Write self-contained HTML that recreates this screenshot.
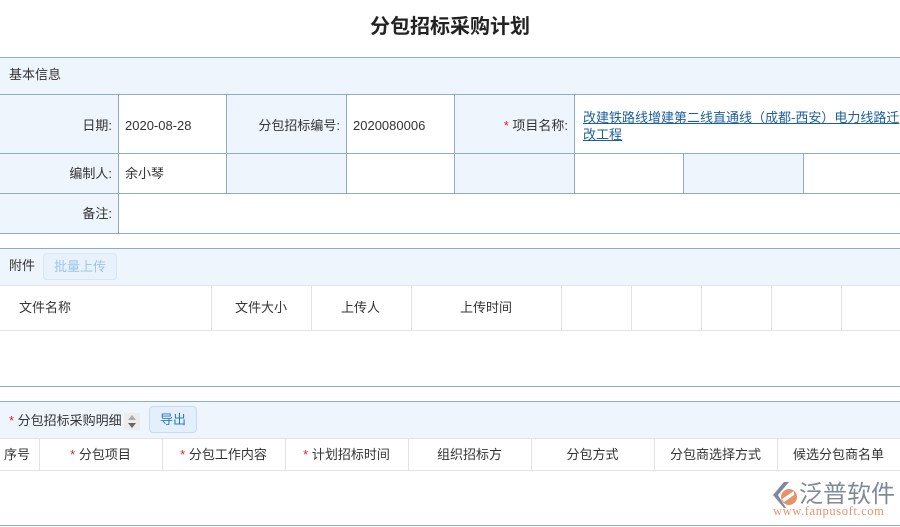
<!DOCTYPE html>
<html><head><meta charset="utf-8"><style>
*{margin:0;padding:0;box-sizing:border-box}
body{width:900px;height:527px;background:#fff;position:relative;overflow:hidden;font-family:"Liberation Sans","Noto Sans CJK SC",sans-serif;font-size:13px;line-height:15px;color:#333}
.a{position:absolute}
.bg{background:#eff5fd}
.hl{position:absolute;left:0;width:900px;height:1px;background:#8fadbf}
.vl{position:absolute;width:1px;background:#8fadbf}
.gl{position:absolute;width:1px;background:#e3e3e3}
.lab{position:absolute;text-align:right}
.r{color:#e02020}
</style></head><body>
<div class="a" style="left:0;top:15px;width:900px;text-align:center;font-size:20px;line-height:24px;font-weight:bold;color:#222">分包招标采购计划</div>

<div class="a bg" style="left:0;top:57px;width:900px;height:37px"></div>
<div class="hl" style="top:57px"></div>
<div class="a" style="left:9px;top:67px">基本信息</div>
<div class="hl" style="top:94px"></div>
<div class="a bg" style="left:0;top:95px;width:118px;height:138px"></div>
<div class="a bg" style="left:226px;top:95px;width:120px;height:98px"></div>
<div class="a bg" style="left:454px;top:95px;width:120px;height:98px"></div>
<div class="a bg" style="left:683px;top:154px;width:120px;height:39px"></div>
<div class="vl" style="left:118px;top:94px;height:139px"></div>
<div class="vl" style="left:226px;top:94px;height:99px"></div>
<div class="vl" style="left:346px;top:94px;height:99px"></div>
<div class="vl" style="left:454px;top:94px;height:99px"></div>
<div class="vl" style="left:574px;top:94px;height:99px"></div>
<div class="vl" style="left:683px;top:153px;height:40px"></div>
<div class="vl" style="left:803px;top:153px;height:40px"></div>
<div class="hl" style="top:153px"></div>
<div class="hl" style="top:193px"></div>
<div class="hl" style="top:233px"></div>
<div class="lab" style="left:0;width:112px;top:118px">日期:</div>
<div class="a" style="left:125px;top:118px">2020-08-28</div>
<div class="lab" style="left:226px;width:114px;top:118px">分包招标编号:</div>
<div class="a" style="left:353px;top:118px">2020080006</div>
<div class="lab" style="left:454px;width:114px;top:118px"><span class="r">*</span> 项目名称:</div>
<div class="a" style="left:583px;top:109px;width:330px;color:#1d5f9e;text-decoration:underline;line-height:17px">改建铁路线增建第二线直通线（成都-西安）电力线路迁<br>改工程</div>
<div class="lab" style="left:0;width:112px;top:166px">编制人:</div>
<div class="a" style="left:125px;top:166px">余小琴</div>
<div class="lab" style="left:0;width:112px;top:206px">备注:</div>

<div class="a bg" style="left:0;top:248px;width:900px;height:37px"></div>
<div class="hl" style="top:248px"></div>
<div class="a" style="left:9px;top:258px">附件</div>
<div class="a" style="left:43px;top:253px;width:74px;height:27px;border:1px solid #d6e6f3;border-radius:4px;background:#e8f2fc;color:#9fc5e6;text-align:center;line-height:25px">批量上传</div>
<div class="a" style="left:0;top:285px;width:900px;height:1px;background:#e3e3e3"></div>
<div class="a" style="left:0;top:330px;width:900px;height:1px;background:#e3e3e3"></div>
<div class="gl" style="left:211px;top:285px;height:45px"></div>
<div class="gl" style="left:311px;top:285px;height:45px"></div>
<div class="gl" style="left:411px;top:285px;height:45px"></div>
<div class="gl" style="left:561px;top:285px;height:45px"></div>
<div class="gl" style="left:631px;top:285px;height:45px"></div>
<div class="gl" style="left:701px;top:285px;height:45px"></div>
<div class="gl" style="left:771px;top:285px;height:45px"></div>
<div class="gl" style="left:841px;top:285px;height:45px"></div>
<div class="a" style="left:19px;top:300px">文件名称</div>
<div class="a" style="left:235px;top:300px">文件大小</div>
<div class="a" style="left:341px;top:300px">上传人</div>
<div class="a" style="left:460px;top:300px">上传时间</div>
<div class="hl" style="top:386px"></div>

<div class="a bg" style="left:0;top:401px;width:900px;height:37px"></div>
<div class="hl" style="top:401px"></div>
<div class="a" style="left:9px;top:413px"><span class="r">*</span> 分包招标采购明细</div>
<div class="a" style="left:124px;top:413px;width:16px;height:17px;background:#ececec"></div>
<div class="a" style="left:128px;top:415px;width:0;height:0;border-left:4px solid transparent;border-right:4px solid transparent;border-bottom:5px solid #aaa"></div>
<div class="a" style="left:128px;top:423px;width:0;height:0;border-left:4px solid transparent;border-right:4px solid transparent;border-top:5px solid #666"></div>
<div class="a" style="left:149px;top:406px;width:48px;height:27px;border:1px solid #c5dcee;border-radius:4px;background:#e3effb;color:#2a78c2;text-align:center;line-height:25px">导出</div>
<div class="a" style="left:0;top:438px;width:900px;height:1px;background:#e3e3e3"></div>
<div class="a" style="left:0;top:470px;width:900px;height:1px;background:#e3e3e3"></div>
<div class="gl" style="left:39px;top:438px;height:32px"></div>
<div class="gl" style="left:162px;top:438px;height:32px"></div>
<div class="gl" style="left:285px;top:438px;height:32px"></div>
<div class="gl" style="left:408px;top:438px;height:32px"></div>
<div class="gl" style="left:531px;top:438px;height:32px"></div>
<div class="gl" style="left:654px;top:438px;height:32px"></div>
<div class="gl" style="left:777px;top:438px;height:32px"></div>
<div class="a" style="left:4px;top:447px">序号</div>
<div class="a" style="left:39px;width:123px;top:447px;text-align:center"><span class="r">*</span> 分包项目</div>
<div class="a" style="left:162px;width:123px;top:447px;text-align:center"><span class="r">*</span> 分包工作内容</div>
<div class="a" style="left:285px;width:123px;top:447px;text-align:center"><span class="r">*</span> 计划招标时间</div>
<div class="a" style="left:408px;width:123px;top:447px;text-align:center">组织招标方</div>
<div class="a" style="left:531px;width:123px;top:447px;text-align:center">分包方式</div>
<div class="a" style="left:654px;width:123px;top:447px;text-align:center">分包商选择方式</div>
<div class="a" style="left:777px;width:123px;top:447px;text-align:center">候选分包商名单</div>
<div class="hl" style="top:525px"></div>

<svg class="a" style="left:770px;top:481px" width="30" height="28" viewBox="0 0 30 28">
<path d="M14 1 L3 14 L14 27 L16 27 L8 14 L19 1Z" fill="#7f8a99"/>
<path d="M19 8 A8 8 0 1 1 19 24 A8 8 0 1 1 19 8Z" fill="#e4936a"/>
<path d="M12 18 L24 10 L24 14 L14 21Z" fill="#fff"/>
</svg>
<div class="a" style="left:799px;top:482px;font-size:24px;line-height:26px;color:#7f8a99;letter-spacing:0px">泛普软件</div>
<div class="a" style="left:773px;top:505px;font-size:12.5px;line-height:13px;color:#e4936a;font-family:'Liberation Serif',serif;letter-spacing:0.6px">www.fanpusoft.com</div>
</body></html>
